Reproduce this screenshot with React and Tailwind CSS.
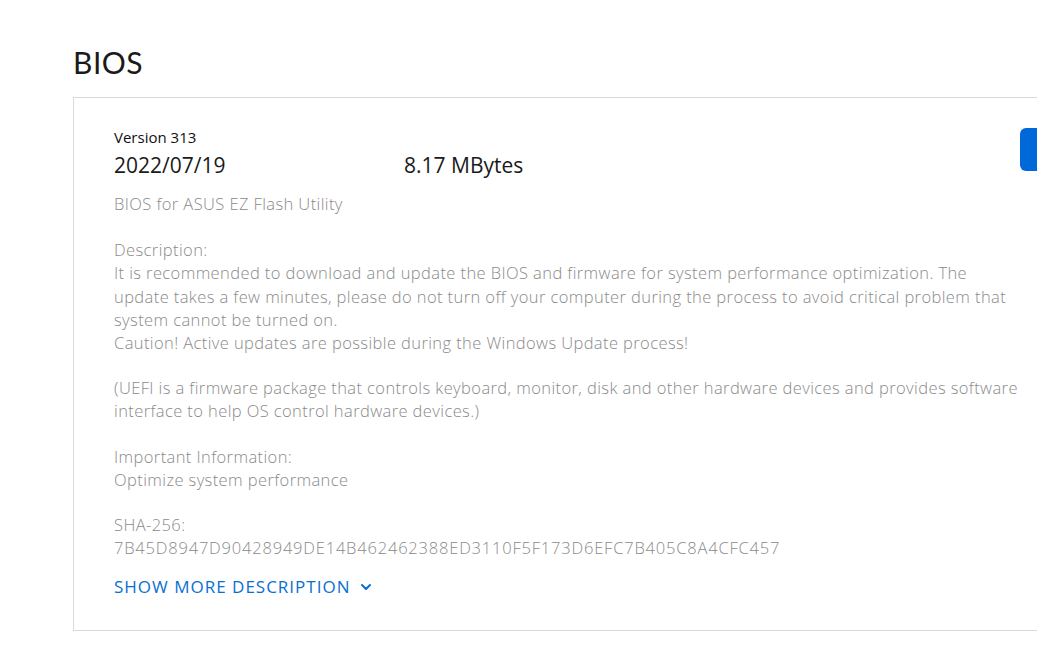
export default function App() {
  return (
    <main className="min-h-[646px] w-[1037px] overflow-hidden bg-white font-['Open_Sans',sans-serif] text-[#1a1a1a]">
      <div className="pl-[73px] pt-[44px]">
        <h1 className="font-['Lato',sans-serif] text-[30px] leading-[36px] font-normal tracking-[0.5px]">BIOS</h1>

        <section className="mt-[17px] w-[1100px] border border-[#d9d9d9] pb-[31px] pl-[40px] pr-[40px] pt-[30px]">
          <div className="flex">
            <div className="w-[906px] shrink-0">
              <p className="text-[15px] leading-[18px] text-[#111]">Version 313</p>
              <div className="mt-[6px] flex text-[21px] leading-[26px]">
                <span className="w-[290px]">2022/07/19</span>
                <span>8.17 MBytes</span>
              </div>

              <div className="mt-[14px] whitespace-nowrap text-[16.5px] font-light leading-[23.2px] tracking-[0.4px] text-[#8a8a8a]">
                <p>BIOS for ASUS EZ Flash Utility</p>

                <p className="mt-[23px]">
                  Description:
                  <br />
                  It is recommended to download and update the BIOS and firmware for system performance optimization. The
                  <br />
                  update takes a few minutes, please do not turn off your computer during the process to avoid critical problem that
                  <br />
                  system cannot be turned on.
                  <br />
                  Caution! Active updates are possible during the Windows Update process!
                </p>

                <p className="mt-[22px]">
                  (UEFI is a firmware package that controls keyboard, monitor, disk and other hardware devices and provides software
                  <br />
                  interface to help OS control hardware devices.)
                </p>

                <p className="mt-[22px]">
                  Important Information:
                  <br />
                  Optimize system performance
                </p>

                <p className="mt-[22px]">
                  SHA-256:
                  <br />
                  <span className="tracking-[0.8px]">7B45D8947D90428949DE14B462462388ED3110F5F173D6EFC7B405C8A4CFC457</span>
                </p>
              </div>

              <button className="mt-[16px] flex items-center gap-[10px] text-[17px] font-medium leading-[24px] tracking-[1px] text-[#0a6fd0]">
                SHOW MORE DESCRIPTION
                <svg width="12" height="12" viewBox="0 0 12 12" fill="none">
                  <path d="M2 4l4 4 4-4" stroke="currentColor" strokeWidth="2" strokeLinecap="round" strokeLinejoin="round" />
                </svg>
              </button>
            </div>

            <div>
              <button className="h-[43px] w-[120px] rounded-[6px] bg-[#0069d9]" />
            </div>
          </div>
        </section>
      </div>
    </main>
  );
}
